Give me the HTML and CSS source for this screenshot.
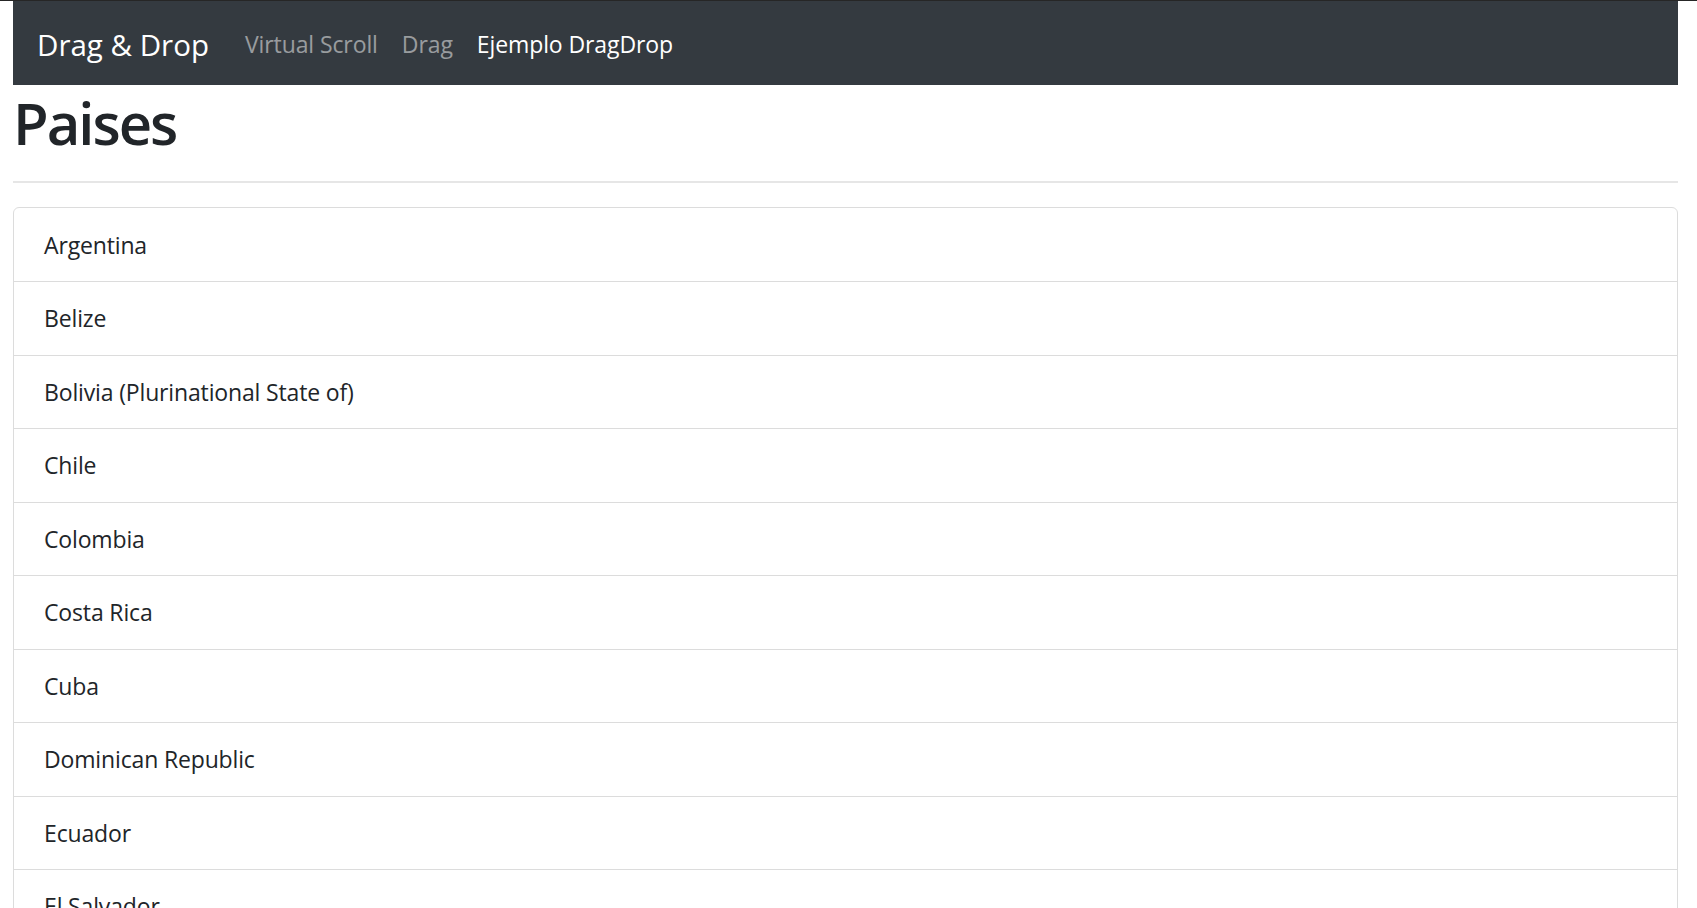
FILE: index.html
```html
<!DOCTYPE html>
<html lang="es">
<head>
<meta charset="utf-8">
<title>Drag &amp; Drop</title>
<link rel="stylesheet" href="styles.css">
</head>
<body>
<nav class="navbar">
  <a class="brand" href="#">Drag &amp; Drop</a>
  <ul class="nav">
    <li><a class="nav-link" href="#">Virtual Scroll</a></li>
    <li><a class="nav-link" href="#">Drag</a></li>
    <li><a class="nav-link active" href="#">Ejemplo DragDrop</a></li>
  </ul>
</nav>
<h1 class="title">Paises</h1>
<hr class="rule">
<ul class="list">
  <li class="item">Argentina</li>
  <li class="item">Belize</li>
  <li class="item">Bolivia (Plurinational State of)</li>
  <li class="item">Chile</li>
  <li class="item">Colombia</li>
  <li class="item">Costa Rica</li>
  <li class="item">Cuba</li>
  <li class="item">Dominican Republic</li>
  <li class="item">Ecuador</li>
  <li class="item">El Salvador</li>
  <li class="item">Guatemala</li>
  <li class="item">Honduras</li>
</ul>
</body>
</html>
```
FILE: styles.css
```css
html {
  overflow: hidden;
  border-top: 1px solid #262626;
  background: #fff;
}
body {
  margin: 0 19px 0 13px;
  font-family: "Open Sans", "Noto Sans", sans-serif;
  font-size: 23px;
  letter-spacing: -0.15px;
  line-height: 1.5;
  color: #212529;
}
.navbar {
  display: flex;
  align-items: center;
  height: 84px;
  box-sizing: border-box;
  padding: 14px 24px 12px;
  background: #343a40;
}
.brand {
  font-size: 29.5px;
  letter-spacing: 0;
  line-height: 45px;
  color: #fff;
  text-decoration: none;
  margin-right: 24px;
  padding: 7.5px 0;
}
.nav {
  display: flex;
  list-style: none;
  margin: 0;
  padding: 0;
}
.nav-link {
  display: block;
  padding: 12px 12px;
  color: rgba(255, 255, 255, 0.5);
  text-decoration: none;
  line-height: 36px;
  letter-spacing: -0.1px;
}
.nav-link.active {
  color: #fff;
}
.title {
  margin: 0;
  font-size: 58px;
  font-weight: 600;
  letter-spacing: -2px;
  line-height: 72px;
  padding-top: 2px;
  height: 70px;
}
.rule {
  margin: 24px 0;
  border: 0;
  border-top: 2px solid #e6e6e6;
  height: 0;
}
.list {
  list-style: none;
  margin: 0;
  padding: 0;
  border: 1px solid #dcdcdc;
  border-radius: 6px;
}
.item {
  padding: 18px 30px 18.5px;
  line-height: 36px;
  border-top: 1px solid #dcdcdc;
}
.item:first-child {
  border-top: 0;
  padding-top: 18.5px;
}
```
